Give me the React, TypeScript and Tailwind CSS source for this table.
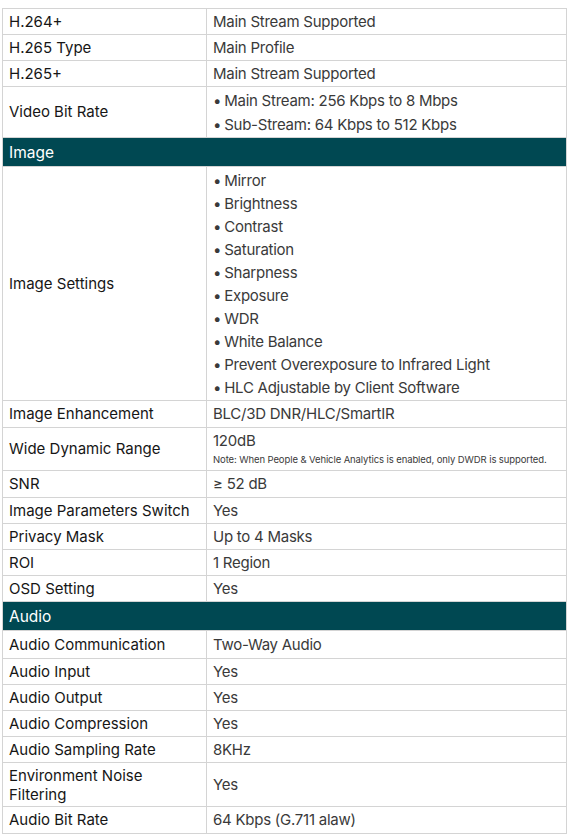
import React from 'react';

// ── Types ─────────────────────────────────────────────────────────────

type Row =
    | { kind: 'section'; title: string; h: string }
    | { kind: 'spec'; label: React.ReactNode; value: React.ReactNode; h: string };

const Bullets = ({ items, gap }: { items: string[]; gap: string }) => (
    <div className={`flex flex-col ${gap}`}>
        {items.map((t) => (
            <div key={t} className="flex leading-[20px]">
                <span className="mr-[3px]">•</span>
                <span>{t}</span>
            </div>
        ))}
    </div>
);

const rows: Row[] = [
    { kind: 'spec', label: 'H.264+', value: 'Main Stream Supported', h: 'h-[26px]' },
    { kind: 'spec', label: 'H.265 Type', value: 'Main Profile', h: 'h-[26px]' },
    { kind: 'spec', label: 'H.265+', value: 'Main Stream Supported', h: 'h-[26px]' },
    {
        kind: 'spec',
        label: 'Video Bit Rate',
        value: (
            <Bullets
                gap="gap-[4px]"
                items={['Main Stream: 256 Kbps to 8 Mbps', 'Sub-Stream: 64 Kbps to 512 Kbps']}
            />
        ),
        h: 'h-[51px]',
    },
    { kind: 'section', title: 'Image', h: 'h-[29px]' },
    {
        kind: 'spec',
        label: 'Image Settings',
        value: (
            <Bullets
                gap="gap-[3px]"
                items={[
                    'Mirror',
                    'Brightness',
                    'Contrast',
                    'Saturation',
                    'Sharpness',
                    'Exposure',
                    'WDR',
                    'White Balance',
                    'Prevent Overexposure to Infrared Light',
                    'HLC Adjustable by Client Software',
                ]}
            />
        ),
        h: 'h-[234px]',
    },
    { kind: 'spec', label: 'Image Enhancement', value: 'BLC/3D DNR/HLC/SmartIR', h: 'h-[27px]' },
    {
        kind: 'spec',
        label: 'Wide Dynamic Range',
        value: (
            <div className="flex flex-col">
                <div className="leading-[20px]">120dB</div>
                <div className="text-[9.5px] leading-[18px] tracking-[-0.1px]">
                    Note: When People &amp; Vehicle Analytics is enabled, only DWDR is supported.
                </div>
            </div>
        ),
        h: 'h-[43px]',
    },
    { kind: 'spec', label: 'SNR', value: '≥ 52 dB', h: 'h-[27px]' },
    { kind: 'spec', label: 'Image Parameters Switch', value: 'Yes', h: 'h-[26px]' },
    { kind: 'spec', label: 'Privacy Mask', value: 'Up to 4 Masks', h: 'h-[26px]' },
    { kind: 'spec', label: 'ROI', value: '1 Region', h: 'h-[26px]' },
    { kind: 'spec', label: 'OSD Setting', value: 'Yes', h: 'h-[26px]' },
    { kind: 'section', title: 'Audio', h: 'h-[29px]' },
    { kind: 'spec', label: 'Audio Communication', value: 'Two-Way Audio', h: 'h-[28px]' },
    { kind: 'spec', label: 'Audio Input', value: 'Yes', h: 'h-[26px]' },
    { kind: 'spec', label: 'Audio Output', value: 'Yes', h: 'h-[26px]' },
    { kind: 'spec', label: 'Audio Compression', value: 'Yes', h: 'h-[26px]' },
    { kind: 'spec', label: 'Audio Sampling Rate', value: '8KHz', h: 'h-[26px]' },
    {
        kind: 'spec',
        label: (
            <span className="block leading-[19px]">
                Environment Noise
                <br />
                Filtering
            </span>
        ),
        value: 'Yes',
        h: 'h-[44px]',
    },
    { kind: 'spec', label: 'Audio Bit Rate', value: '64 Kbps (G.711 alaw)', h: 'h-[27px]' },
];

// ── Page ──────────────────────────────────────────────────────────────

export default function App() {
    return (
        <div className="min-h-[836px] bg-white pt-[8px] pl-[2px] pr-[3px] font-['Inter','Liberation_Sans',sans-serif] text-[15px]">
            <div className="flex flex-col border-t border-l border-r border-[#d4d4d4]">
                {rows.map((r, i) =>
                    r.kind === 'section' ? (
                        <div
                            key={i}
                            className={`${r.h} flex items-center bg-[#004852] px-[6px] pt-px text-[15.5px] text-white border-b border-[#d4d4d4]`}
                        >
                            {r.title}
                        </div>
                    ) : (
                        <div key={i} className={`${r.h} flex border-b border-[#d4d4d4]`}>
                            <div className="flex w-[204px] shrink-0 items-center border-r border-[#d4d4d4] px-[6px] pt-px text-[#161616]">
                                {r.label}
                            </div>
                            <div className="flex flex-1 items-center px-[6px] pt-px tracking-[-0.25px] text-[#3a3a3a]">
                                {r.value}
                            </div>
                        </div>
                    ),
                )}
            </div>
        </div>
    );
}
